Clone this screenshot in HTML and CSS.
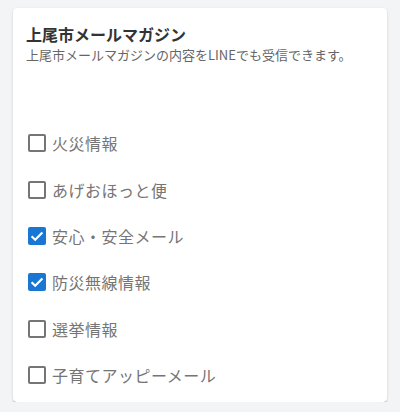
FILE: index.html
```html
<!DOCTYPE html>
<html lang="ja">
<head>
<meta charset="utf-8">
<link rel="stylesheet" href="styles.css">
</head>
<body>
<div class="card">
  <h2 class="title">上尾市メールマガジン</h2>
  <p class="subtitle">上尾市メールマガジンの内容をLINEでも受信できます。</p>
  <ul class="list">
    <li class="item"><span class="box"></span><span class="label">火災情報</span></li>
    <li class="item"><span class="box"></span><span class="label">あげおほっと便</span></li>
    <li class="item"><span class="box checked"><svg viewBox="0 0 18 18" width="18" height="18"><path d="M3.6 9.2 L7.2 12.7 L14.4 5.4" fill="none" stroke="#fff" stroke-width="2.2"/></svg></span><span class="label">安心・安全メール</span></li>
    <li class="item"><span class="box checked"><svg viewBox="0 0 18 18" width="18" height="18"><path d="M3.6 9.2 L7.2 12.7 L14.4 5.4" fill="none" stroke="#fff" stroke-width="2.2"/></svg></span><span class="label">防災無線情報</span></li>
    <li class="item"><span class="box"></span><span class="label">選挙情報</span></li>
    <li class="item"><span class="box"></span><span class="label">子育てアッピーメール</span></li>
  </ul>
</div>
</body>
</html>
```
FILE: styles.css
```css
html, body {
  margin: 0;
  padding: 0;
  background: #f3f4f6;
}
body {
  padding: 8px 13px 0;
  font-family: "Noto Sans CJK JP", "Noto Sans", sans-serif;
}
.card {
  background: #fff;
  border-radius: 4px;
  box-shadow: 0 2px 1px -1px rgba(0,0,0,0.2), 0 1px 1px 0 rgba(0,0,0,0.14), 0 1px 3px 0 rgba(0,0,0,0.12);
  padding: 14px 13px 3px;
  height: 394px;
  box-sizing: border-box;
}
.title {
  margin: 0;
  font-size: 16px;
  line-height: 24px;
  font-weight: 700;
  color: #333;
}
.subtitle {
  margin: 0;
  font-size: 13px;
  line-height: 18px;
  color: #666;
}
.list {
  list-style: none;
  margin: 56px 0 0;
  padding: 0;
}
.item {
  height: 46.4px;
  display: flex;
  align-items: center;
}
.box {
  width: 18px;
  height: 18px;
  box-sizing: border-box;
  border: 2px solid #757575;
  border-radius: 2px;
  margin-left: 2px;
  margin-right: 6px;
  display: flex;
  align-items: center;
  justify-content: center;
}
.box.checked {
  background: #1976d2;
  border: none;
}
.label {
  font-size: 16px;
  letter-spacing: 0.5px;
  color: #757575;
}
```
